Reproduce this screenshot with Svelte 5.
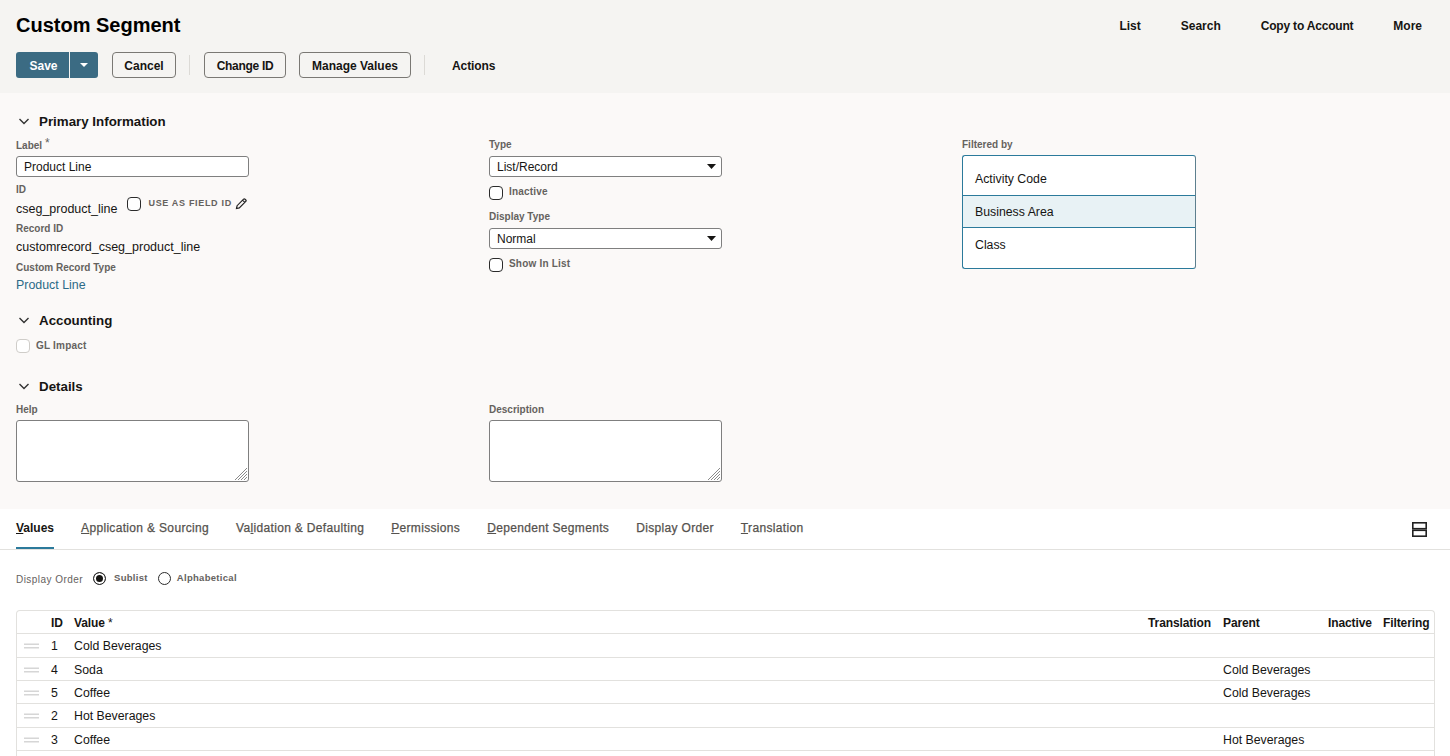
<script lang="ts">
	const topLinks = ['List', 'Search', 'Copy to Account', 'More'];
	const filters = [
		{ name: 'Activity Code', selected: false },
		{ name: 'Business Area', selected: true },
		{ name: 'Class', selected: false }
	];
	// accesskey letter is underlined, so keep the text split around it
	const tabs = [
		{ pre: '', key: 'V', post: 'alues', active: true },
		{ pre: '', key: 'A', post: 'pplication & Sourcing' },
		{ pre: 'Va', key: 'l', post: 'idation & Defaulting' },
		{ pre: '', key: 'P', post: 'ermissions' },
		{ pre: '', key: 'D', post: 'ependent Segments' },
		{ pre: 'Display Order', key: '', post: '' },
		{ pre: '', key: 'T', post: 'ranslation' }
	];
	const rows = [
		{ id: 1, value: 'Cold Beverages', parent: '', h: 24 },
		{ id: 4, value: 'Soda', parent: 'Cold Beverages', h: 23 },
		{ id: 5, value: 'Coffee', parent: 'Cold Beverages', h: 23 },
		{ id: 2, value: 'Hot Beverages', parent: '', h: 24 },
		{ id: 3, value: 'Coffee', parent: 'Hot Beverages', h: 23 },
		{ id: '', value: '', parent: '', h: 23 }
	];
</script>

{#snippet chevron()}
	<svg class="chev" width="12" height="12" viewBox="0 0 12 12"><path d="M1.5 4L6 8.5 10.5 4" fill="none" stroke="#333" stroke-width="1.4" /></svg>
{/snippet}

{#snippet grip()}
	<svg width="15" height="12" viewBox="0 0 15 12"><path d="M0 4.2h15M0 7.8h15" stroke="#d6d6d6" stroke-width="1.5" fill="none" /></svg>
{/snippet}

{#snippet caret()}
	<svg class="caret" width="9" height="5" viewBox="0 0 10 5" preserveAspectRatio="none"><path d="M0 0h10L5 5z" fill="#161513" /></svg>
{/snippet}

{#snippet grabber()}
	<svg class="grabber" width="14" height="14" viewBox="0 0 14 14">
		<path d="M1 13L13 1M4 13l9-9M7 13l6-6M10 13l3-3" stroke="#8a8a8a" stroke-width="1" fill="none" />
	</svg>
{/snippet}

<div class="page">
	<header class="head">
		<div class="title-row">
			<h1>Custom Segment</h1>
			<nav class="top-links">
				{#each topLinks as link}
					<span>{link}</span>
				{/each}
			</nav>
		</div>
		<div class="toolbar">
			<div class="split">
				<button class="primary save">Save</button>
				<button class="primary more" aria-label="More save options">
					<svg width="8" height="4" viewBox="0 0 8 4"><path d="M0 0h8L4 4z" fill="#fff" /></svg>
				</button>
			</div>
			<button class="btn cancel">Cancel</button>
			<i class="sep"></i>
			<button class="btn change">Change ID</button>
			<button class="btn manage">Manage Values</button>
			<i class="sep"></i>
			<span class="actions">Actions</span>
		</div>
	</header>

	<main class="form">
		<h2 class="sec first">{@render chevron()}Primary Information</h2>
		<div class="cols primary-cols">
			<div class="col">
				<div class="lbl">Label <span class="req">*</span></div>
				<div class="input">Product Line</div>
				<div class="lbl gap-id">ID</div>
				<div class="id-row">
					<span class="val">cseg_product_line</span>
					<i class="check"></i>
					<span class="upper">USE AS FIELD ID</span>
					<svg class="pencil" width="12" height="12" viewBox="0 0 12 12">
						<path d="M1.5 10.5l.6-2.8L8.6 1.2a1 1 0 0 1 1.4 0l.8.8a1 1 0 0 1 0 1.4L4.3 9.9z M7.6 2.2l2.2 2.2" fill="none" stroke="#222" stroke-width="1.2" />
					</svg>
				</div>
				<div class="lbl">Record ID</div>
				<div class="val line">customrecord_cseg_product_line</div>
				<div class="lbl gap-type">Custom Record Type</div>
				<div class="val line link">Product Line</div>
			</div>
			<div class="col">
				<div class="lbl">Type</div>
				<div class="input select">List/Record{@render caret()}</div>
				<label class="cb-row"><i class="check"></i><span>Inactive</span></label>
				<div class="lbl gap-disp">Display Type</div>
				<div class="input select">Normal{@render caret()}</div>
				<label class="cb-row"><i class="check"></i><span>Show In List</span></label>
			</div>
			<div class="col">
				<div class="lbl">Filtered by</div>
				<div class="listbox">
					{#each filters as f}
						<div class="opt" class:selected={f.selected}>{f.name}</div>
					{/each}
				</div>
			</div>
		</div>

		<h2 class="sec acct">{@render chevron()}Accounting</h2>
		<label class="cb-row gl"><i class="check off"></i><span>GL Impact</span></label>

		<h2 class="sec details">{@render chevron()}Details</h2>
		<div class="cols details-cols">
			<div class="col">
				<div class="lbl">Help</div>
				<div class="textarea">{@render grabber()}</div>
			</div>
			<div class="col">
				<div class="lbl">Description</div>
				<div class="textarea">{@render grabber()}</div>
			</div>
		</div>
	</main>

	<section class="lower">
		<div class="tabs">
			{#each tabs as t}
				<span class="tab" class:active={t.active}>{t.pre}<u>{t.key}</u>{t.post}</span>
			{/each}
			<svg class="layout-icon" width="15" height="15" viewBox="0 0 15 15">
				<rect x="0.8" y="0.8" width="13.4" height="5.9" fill="none" stroke="#222" stroke-width="1.6" />
				<rect x="0.8" y="8.3" width="13.4" height="5.9" fill="none" stroke="#222" stroke-width="1.6" />
			</svg>
		</div>

		<div class="order">
			<span class="order-lbl">Display Order</span>
			<i class="radio on"></i><span class="radio-lbl">Sublist</span>
			<i class="radio"></i><span class="radio-lbl">Alphabetical</span>
		</div>

		<div class="table">
			<div class="row th">
				<span></span>
				<span>ID</span>
				<span>Value <em>*</em></span>
				<span>Translation</span>
				<span>Parent</span>
				<span>Inactive</span>
				<span>Filtering</span>
			</div>
			{#each rows as r}
				<div class="row" class:tall={r.h === 24} style="height: {r.h}px">
					<span class="grip">{#if r.value}{@render grip()}{/if}</span>
					<span>{r.id}</span>
					<span>{r.value}</span>
					<span></span>
					<span>{r.parent}</span>
					<span></span>
					<span></span>
				</div>
			{/each}
		</div>
	</section>
</div>

<style>
	:global(body) {
		margin: 0;
		background: #fff;
		overflow: hidden;
	}

	.page {
		height: 756px;
		overflow: hidden;
		font-family: 'Liberation Sans', Arial, sans-serif;
		font-size: 12px;
		color: #161513;
	}

	.head {
		height: 93px;
		box-sizing: border-box;
		padding: 0 16px;
		background: #f5f4f2;
	}

	.title-row {
		display: flex;
		justify-content: space-between;
		align-items: center;
		height: 52px;
	}

	h1 {
		margin: 0;
		padding-bottom: 2px;
		font-size: 20px;
		font-weight: 700;
		color: #000;
	}

	.top-links {
		display: flex;
		gap: 40px;
		padding-right: 12px;
		font-weight: 700;
	}

	.top-links span:nth-child(3) {
		letter-spacing: -0.2px;
	}

	.toolbar {
		display: flex;
		align-items: center;
		height: 26px;
	}

	button {
		font: inherit;
		font-weight: 700;
		cursor: pointer;
	}

	.split {
		display: flex;
		gap: 1px;
		margin-right: 14px;
	}

	.primary {
		height: 26px;
		border: none;
		background: #3b6b83;
		color: #fff;
		padding: 1px 0 0;
	}

	.save {
		width: 53px;
		padding-left: 2px;
		border-radius: 3px 0 0 3px;
	}

	.more {
		width: 28px;
		padding: 0;
		border-radius: 0 3px 3px 0;
		display: flex;
		align-items: center;
		justify-content: center;
	}

	.btn {
		height: 26px;
		padding: 1px 0 0;
		border: 1px solid #7a7874;
		border-radius: 4px;
		background: transparent;
		color: #161513;
	}

	.cancel {
		width: 64px;
	}

	.change {
		width: 82px;
		letter-spacing: -0.3px;
	}

	.manage {
		width: 112px;
		margin-left: 13px;
	}

	.sep {
		width: 1px;
		height: 20px;
		background: #dcdad6;
		margin: 0 14px 0 13px;
	}

	.actions {
		font-weight: 700;
		margin-left: 13px;
		padding-top: 1px;
		letter-spacing: -0.1px;
	}

	.form {
		height: 416px;
		box-sizing: border-box;
		padding: 0 16px;
		background: #fbf9f8;
	}

	.sec {
		display: flex;
		align-items: center;
		margin: 0;
		height: 16px;
		font-size: 13.33px;
		font-weight: 700;
		color: #161513;
	}

	.chev {
		margin: 0 9px 0 2px;
	}

	.first {
		padding-top: 20px;
	}

	.acct {
		margin-top: 20px;
	}

	.details {
		margin-top: 25px;
	}

	.cols {
		display: grid;
		grid-template-columns: 473px 473px 1fr;
	}

	.primary-cols {
		margin-top: 9px;
	}

	.details-cols {
		margin-top: 9px;
	}

	.lbl {
		height: 12px;
		font-size: 10px;
		line-height: 14px;
		font-weight: 700;
		color: #65625e;
	}

	.req {
		position: relative;
		top: -2px;
		color: #65625e;
		font-weight: 400;
		font-size: 12px;
	}

	.input {
		position: relative;
		width: 233px;
		height: 21px;
		box-sizing: border-box;
		margin-top: 6px;
		padding-left: 7px;
		border: 1px solid #7f7f7f;
		border-radius: 3px;
		background: #fff;
		line-height: 20px;
	}

	.caret {
		position: absolute;
		right: 5px;
		top: 7px;
	}

	.gap-id {
		margin-top: 6px;
	}

	.id-row {
		display: flex;
		align-items: flex-start;
		height: 26px;
		margin-top: 1px;
	}

	.val {
		font-size: 12.5px;
		line-height: 14px;
		margin-top: 6px;
	}

	.id-row .check {
		margin: 1px 7px 0 10px;
	}

	.upper {
		margin-top: 1px;
		font-size: 9px;
		line-height: 12px;
		letter-spacing: 0.68px;
		font-weight: 700;
		color: #65625e;
	}

	.pencil {
		margin: 2px 0 0 3px;
	}

	.line {
		height: 14px;
	}

	.gap-type {
		margin-top: 7px;
	}

	.link {
		color: #2b6a87;
		font-size: 12.4px;
		margin-top: 5px;
	}

	.check {
		display: block;
		flex: none;
		box-sizing: border-box;
		width: 14px;
		height: 14px;
		border: 1px solid #2b2b2b;
		border-radius: 4px;
		background: #fff;
	}

	.check.off {
		border-color: #cfcdc9;
	}

	.cb-row {
		display: flex;
		align-items: center;
		gap: 6px;
		height: 15px;
		margin-top: 8px;
		font-size: 10px;
		letter-spacing: 0.2px;
		font-weight: 700;
		color: #65625e;
	}

	.cb-row span {
		position: relative;
		top: -1px;
	}

	.gap-disp {
		margin-top: 10px;
	}

	.gl {
		margin-top: 10px;
	}

	.gl span {
		top: 0;
	}

	.listbox {
		width: 234px;
		height: 114px;
		box-sizing: border-box;
		margin-top: 5px;
		padding: 6px 0;
		border: 1px solid #2b7a9b;
		border-right-color: #5d7f8e;
		border-radius: 3px;
		background: #fff;
		display: flex;
		flex-direction: column;
	}

	.opt {
		height: 33px;
		box-sizing: border-box;
		padding-left: 12px;
		line-height: 34px;
		font-size: 12.3px;
		color: #161513;
	}

	.opt.selected {
		background: #e8f2f5;
		border-top: 1px solid #2b7a9b;
		border-bottom: 1px solid #2b7a9b;
		line-height: 32px;
	}

	.textarea {
		position: relative;
		width: 233px;
		height: 62px;
		box-sizing: border-box;
		margin-top: 5px;
		border: 1px solid #7f7f7f;
		border-radius: 3px;
		background: #fff;
	}

	.grabber {
		position: absolute;
		right: 0;
		bottom: 0;
	}

	.lower {
		background: #fff;
	}

	.tabs {
		position: relative;
		display: flex;
		gap: 27px;
		height: 41px;
		box-sizing: border-box;
		padding: 0 16px;
		border-bottom: 1px solid #e2e1de;
	}

	.tab {
		height: 40px;
		box-sizing: border-box;
		padding-top: 12px;
		line-height: 15px;
		font-size: 12px;
		color: #55524e;
		letter-spacing: 0.33px;
		font-weight: 400;
		-webkit-text-stroke: 0.25px #55524e;
	}

	.tab.active {
		color: #161513;
		font-weight: 700;
		letter-spacing: 0;
		-webkit-text-stroke: 0;
		border-bottom: 2px solid #2b7a9b;
	}

	.layout-icon {
		position: absolute;
		right: 23px;
		top: 13px;
	}

	.order {
		display: flex;
		align-items: center;
		height: 16px;
		margin: 20px 0 0 16px;
		color: #65625e;
	}

	.order-lbl {
		position: relative;
		top: 1px;
		width: 67px;
		font-size: 10px;
		letter-spacing: 0.45px;
		white-space: nowrap;
		margin-right: 10px;
	}

	.radio {
		width: 11px;
		height: 11px;
		border: 1px solid #2b2b2b;
		border-radius: 50%;
		background: #fff;
		margin-right: 6px;
	}

	.radio.on {
		margin-right: 8px;
		background: #161513;
		box-shadow: inset 0 0 0 2px #fff;
	}

	.radio-lbl {
		position: relative;
		top: -1px;
		font-size: 9.5px;
		letter-spacing: 0.3px;
		font-weight: 700;
		margin-right: 10px;
	}

	.table {
		margin: 24px 15px 0 16px;
		border: 1px solid #e2e1de;
		border-bottom: none;
		border-radius: 4px 4px 0 0;
		font-size: 12.3px;
	}

	.row {
		display: grid;
		grid-template-columns: 34px 23px 1074px 75px 105px 55px 1fr;
		align-items: center;
		box-sizing: border-box;
		padding-top: 1px;
		border-top: 1px solid #e2e1de;
		color: #161513;
	}

	.row.tall {
		padding-top: 0;
	}

	.th {
		height: 22px;
		border-top: none;
		font-size: 12px;
		font-weight: 700;
		letter-spacing: -0.1px;
	}

	.th em {
		font-style: normal;
		font-weight: 400;
	}

	.grip {
		display: flex;
		padding-left: 7px;
	}
</style>
